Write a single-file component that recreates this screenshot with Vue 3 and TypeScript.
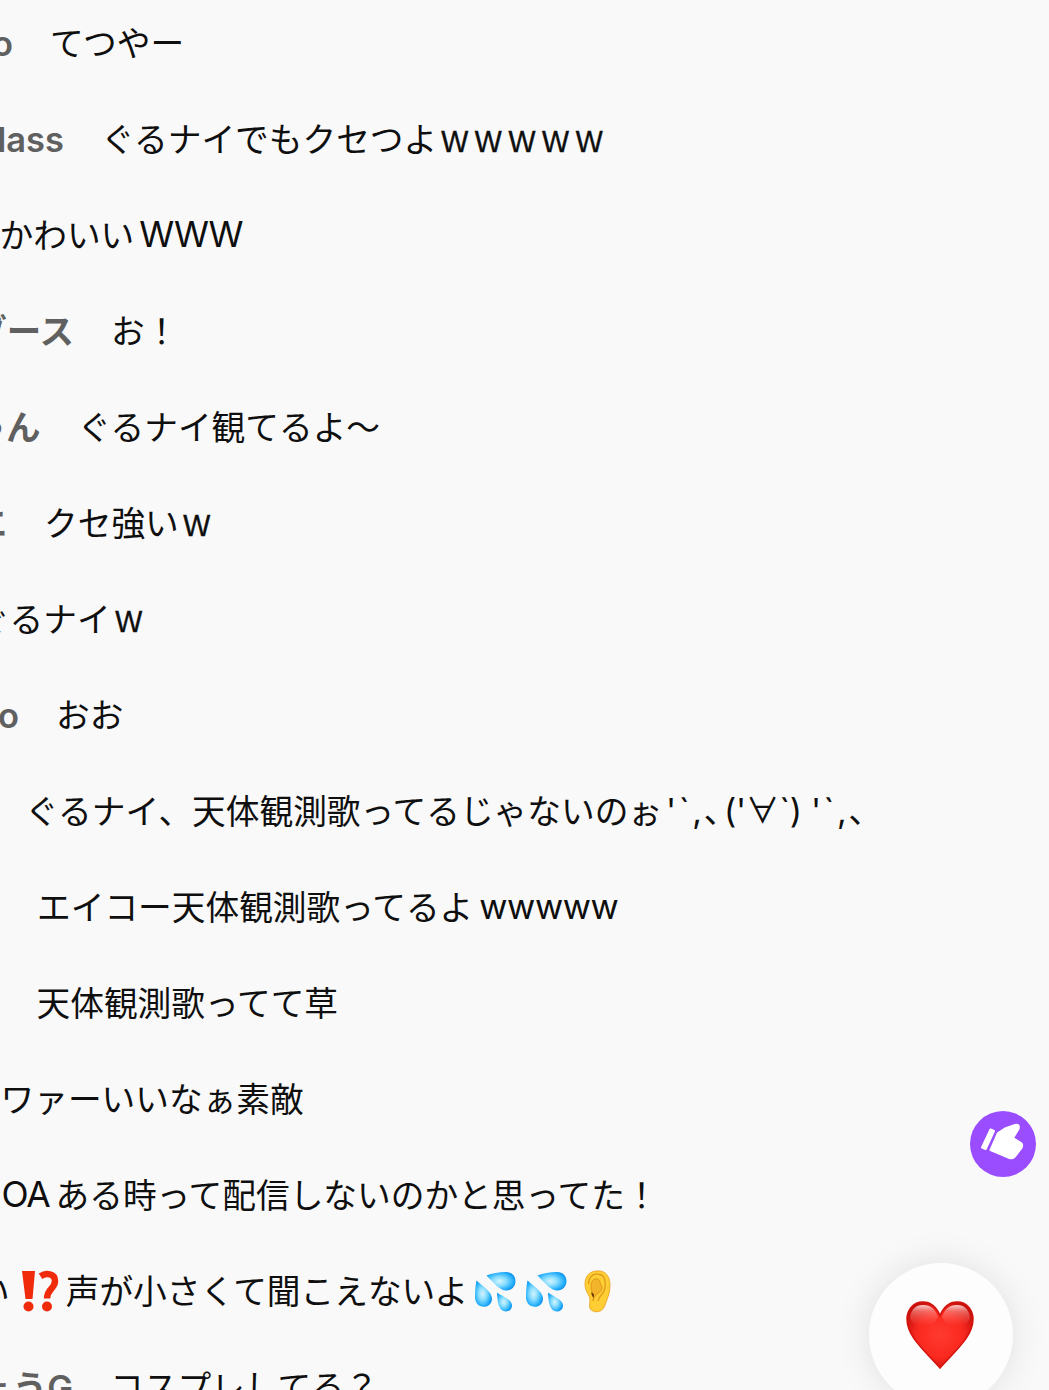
<script setup lang="ts">
import { ref } from 'vue'

type Part = { kind: 'ja' | 'wide' | 'latin' | 'narrow' | 'ticks' | 'face' | 'bang' | 'sweat' | 'ear', text?: string }

interface Comment {
    name?: string
    x: number
    parts: Part[]
}

const ja = (text: string): Part => ({ kind: 'ja', text })
const wide = (text: string): Part => ({ kind: 'wide', text })
const ticks: Part = { kind: 'ticks', text: "'`,､" }

//x is where the message starts, the name sits to the left of it
const comments = ref<Comment[]>([
    { name: 'o', x: 50, parts: [ja('てつやー')] },
    { name: 'lass', x: 101, parts: [ja('ぐるナイでもクセつよ'), wide('ｗｗｗｗｗ')] },
    { x: -0.5, parts: [ja('かわいい'), { kind: 'latin', text: 'WWW' }] },
    { name: 'ブース', x: 111, parts: [ja('お！')] },
    { name: 'ゃん', x: 77.5, parts: [ja('ぐるナイ観てるよ〜')] },
    { name: 'エ', x: 44, parts: [ja('クセ強い'), wide('ｗ')] },
    { x: -23.5, parts: [ja('ぐるナイ'), wide('ｗ')] },
    { name: 'o', x: 56, parts: [ja('おお')] },
    { x: 25, parts: [ja('ぐるナイ、天体観測歌ってるじゃないのぉ'), ticks, { kind: 'face', text: "('∀`) " }, ticks] },
    { x: 37, parts: [ja('エイコー天体観測歌ってるよ'), { kind: 'narrow', text: 'wwwww' }] },
    { x: 36.5, parts: [ja('天体観測歌ってて草')] },
    { x: 0.5, parts: [ja('ワァーいいなぁ素敵')] },
    { x: 1.5, parts: [{ kind: 'latin', text: 'OA' }, ja('ある時って配信しないのかと思ってた！')] },
    { x: -24, parts: [ja('い'), { kind: 'bang' }, ja('声が小さくて聞こえないよ'), { kind: 'sweat' }, { kind: 'sweat' }, { kind: 'ear' }] },
    { name: 'ょうG', x: 110, parts: [ja('コスプレしてる？')] },
])

const liked = ref(0)
</script>

<template>
    <main class="chat">
        <div v-for="(comment, i) in comments" :key="i" class="row">
            <div v-if="comment.name" class="name" :style="{ width: comment.x + 'px' }">{{ comment.name }}</div>
            <div class="message" :style="{ marginLeft: (comment.name ? 0 : comment.x) + 'px' }">
                <template v-for="(part, j) in comment.parts" :key="j">
                    <svg v-if="part.kind === 'bang'" class="bang" viewBox="0 0 38 42">
                        <g fill="#f02b0b">
                            <path d="M1 1h13l-2.500 28h-7z" />
                            <circle cx="7.500" cy="36.500" r="5" />
                            <circle cx="26" cy="36.500" r="5" />
                        </g>
                        <path d="M19.500 6.200C25 2.600 34 3.500 34 11C34 19 26 18.500 26 28.500" fill="none" stroke="#f02b0b" stroke-width="6.500" />
                    </svg>
                    <svg v-else-if="part.kind === 'sweat'" class="sweat" viewBox="0 0 42 42">
                        <defs>
                            <radialGradient id="drop" cx=".45" cy=".5" r=".58">
                                <stop offset="0" stop-color="#d4f4ff" />
                                <stop offset=".4" stop-color="#8adefe" />
                                <stop offset=".8" stop-color="#27b0fb" />
                                <stop offset="1" stop-color="#0b90ec" />
                            </radialGradient>
                        </defs>
                        <g fill="url(#drop)">
                            <path d="M11.500 3.500C17 1.500 24 0 31 0C37 0 40.500 4 40.500 9C40.500 14.500 36.500 18.500 31.500 18.500C24.500 18.500 18.500 10.500 11.500 3.500z" />
                            <path d="M1.500 8.500C6 13 17 19.500 17 26.500C17 31.500 13.500 34.800 8.800 34.800C3.500 34.800 0 30.500 0 25C0 19 .5 13.500 1.500 8.500z" />
                            <path d="M22 20.500C26 24 37 27 37 33.500C37 37 34.500 39.500 31 39.500C23.500 39.500 22.500 29.500 22 20.500z" />
                        </g>
                    </svg>
                    <svg v-else-if="part.kind === 'ear'" class="ear" viewBox="0 0 27 43">
                        <path d="M13 1C21 0 26 6 26 15C26 24 23 29 21 35C19 41 14 43 9 41C4 39 6 34 6 30C6 25 1 22 1 14C1 6 6 1 13 1z" fill="#ffce35" stroke="#e79b13" stroke-width=".8" />
                        <path d="M4.500 14C5 6 10 3.500 14 4C21 4.500 22 12 21 18C20 24 15 26 14 31" fill="none" stroke="#dc9a1c" stroke-width="1.300" />
                        <path d="M7 14C8 8 15 7 16 12C17 16 20 18 16 22C13 24 10 26 9 31C10 26 8 22 7 19z" fill="#f2b42a" stroke="#d98f14" stroke-width=".8" />
                        <path d="M7.500 22L10 24.500L9.800 28C8 26 7 24.500 7.500 22z" fill="#6d3a05" />
                    </svg>
                    <span v-else :class="part.kind">{{ part.text }}</span>
                </template>
            </div>
        </div>

        <div class="thumb">
            <svg viewBox="0 0 66 66">
                <g fill="#fff" stroke="#fff" stroke-linejoin="round">
                    <path d="M20.500 18.500L24 20L15.700 38L12 36.500z" stroke-width="2" />
                    <path d="M28 22L35 17.500L45 14Q50 13 48.500 18L43 27L51 32Q53 34 51.500 37L45 45.500Q43 48 39.500 47L20.500 39z" stroke-width="2" />
                </g>
            </svg>
        </div>

        <button class="like" aria-label="like" @click="liked++">
            <svg viewBox="0 0 68 68">
                <defs>
                    <radialGradient id="heart" cx=".5" cy=".5" r=".62">
                        <stop offset="0" stop-color="#ff3a30" />
                        <stop offset=".55" stop-color="#fa291f" />
                        <stop offset="1" stop-color="#bd0b08" />
                    </radialGradient>
                    <linearGradient id="shine" x1="0" y1="0" x2="0" y2="1">
                        <stop offset="0" stop-color="#fff" stop-opacity=".8" />
                        <stop offset=".3" stop-color="#ffb0aa" stop-opacity=".5" />
                        <stop offset="1" stop-color="#ff6a60" stop-opacity="0" />
                    </linearGradient>
                </defs>
                <path d="M34 14.500C30 5 24 1 17 1C7 1 1 9 1 18C1 35 17 48 34 67C51 48 67 35 67 18C67 9 61 1 51 1C44 1 38 5 34 14.500z" fill="url(#heart)" stroke="#d3130e" stroke-width="1.500" />
                <path d="M4 17C5 8 10 4 17 4C25 4 29 8 32 16C28 27 8 30 4 17z" fill="url(#shine)" />
                <path d="M64 17C63 8 58 4 51 4C43 4 39 8 36 16C40 27 60 30 64 17z" fill="url(#shine)" />
            </svg>
        </button>
    </main>
</template>

<style>
body {
    margin: 0;
    overflow: hidden;
    background-color: #f9f9f9;
}
</style>

<style scoped>
.chat {
    position: relative;
    box-sizing: border-box;
    height: 1390px;
    overflow: hidden;
    background-color: #f9f9f9;
    color: #0f0f0f;
    font-family: "Noto Sans CJK JP", sans-serif;
    font-size: 33.7px;
}

.row {
    display: flex;
    height: 96px;
    line-height: 96px;
    white-space: pre;
}
.row:first-child {
    margin-top: -5px;
}

.name {
    display: flex;
    flex: none;
    justify-content: flex-end;
    box-sizing: border-box;
    padding-right: 37px;
    color: #606060;
    font-family: Inter, "Noto Sans CJK JP", sans-serif;
    font-size: 34.5px;
    font-weight: 600;
    line-height: 98px;
}

.message {
    display: flex;
    flex: none;
    align-items: center;
}

.ja {
    height: 98px;
}

/* fullwidth letters, drawn taller and slimmer than the font has them */
.wide {
    height: 102px;
    margin-left: 2px;
    font-size: 38px;
    letter-spacing: 2.5px;
    transform: scaleX(0.83);
    transform-origin: left;
    -webkit-text-stroke: 0.4px #0f0f0f;
}

.latin,
.narrow {
    margin: 0 6px;
    font-family: Inter, sans-serif;
    font-size: 34.5px;
    line-height: 98px;
}
.narrow {
    margin-left: 6px;
    letter-spacing: -0.4px;
}
.latin {
    margin-left: 5px;
    font-size: 35.5px;
    letter-spacing: -1.2px;
}
.latin:first-child {
    margin-left: 0;
}

.ticks,
.face {
    font-family: Inter, "Noto Sans CJK JP", sans-serif;
}
.face {
    letter-spacing: -0.3px;
}
.ticks {
    letter-spacing: 2.6px;
}
.ja + .ticks {
    margin-left: 4px;
}

.bang {
    width: 38px;
    height: 42px;
    margin: 0 7px 0 11px;
}
.sweat {
    width: 42px;
    height: 42px;
    margin: 4px 2px 0 7px;
}
.ear {
    width: 27px;
    height: 43px;
    margin-left: 14px;
}

.thumb {
    position: absolute;
    top: 1111px;
    left: 970px;
    width: 66px;
    height: 66px;
    border-radius: 50%;
    background-color: #9a4dff;
}
.thumb svg {
    display: block;
}

.like {
    position: absolute;
    top: 1263px;
    left: 869px;
    width: 144px;
    height: 144px;
    padding: 0;
    border: none;
    border-radius: 50%;
    background-color: #fdfdfd;
    box-shadow: 0 0 36px rgba(0, 0, 0, 0.1);
    cursor: pointer;
}
.like svg {
    display: block;
    width: 68px;
    height: 68px;
    margin-left: 37px;
}
</style>
